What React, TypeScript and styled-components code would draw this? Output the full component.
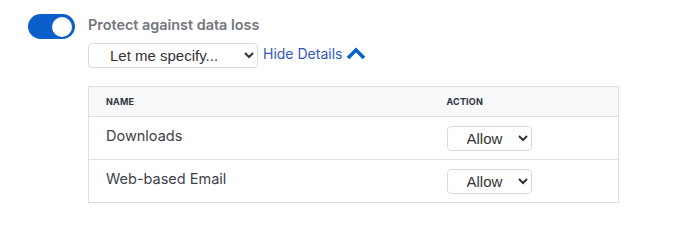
import * as React from 'react'
import styled, { createGlobalStyle } from 'styled-components'

const GlobalStyle = createGlobalStyle`
  body {
    margin: 0;
    background: #ffffff;
    font-family: Inter, "Noto Sans", sans-serif;
  }
`

const Page = styled.div`
  display: flex;
  align-items: flex-start;
  gap: 13px;
  padding: 14px 0 0 28px;
`

const Toggle = styled.button<{ $on: boolean }>`
  width: 47px;
  height: 25px;
  border: none;
  border-radius: 13px;
  padding: 0 3px;
  display: flex;
  align-items: center;
  justify-content: ${(p) => (p.$on ? 'flex-end' : 'flex-start')};
  background: ${(p) => (p.$on ? '#0b5fcb' : '#c4c8cf')};
  cursor: pointer;
`

const Knob = styled.span`
  width: 20px;
  height: 20px;
  border-radius: 50%;
  background: #ffffff;
`

const Content = styled.div`
  display: flex;
  flex-direction: column;
`

const Title = styled.div`
  font-size: 14.4px;
  font-weight: 600;
  color: #72767e;
  line-height: 20px;
  margin-top: 1px;
`

const Controls = styled.div`
  display: flex;
  align-items: center;
  gap: 5px;
  margin-top: 8px;
`

const Select = styled.select<{ $width: number; $inset: number }>`
  width: ${(p) => p.$width}px;
  height: 25px;
  padding: 0 6px 0 ${(p) => p.$inset}px;
  border: 1px solid #d7d9dd;
  border-radius: 4px;
  background: #ffffff;
  color: #333333;
  font-family: "Liberation Sans", Arial, sans-serif;
  font-size: 15px;
`

const DetailsLink = styled.a`
  display: flex;
  align-items: center;
  gap: 4px;
  color: #3558c2;
  font-size: 14px;
  text-decoration: none;
  cursor: pointer;
  margin-top: -4px;
`

const Table = styled.table`
  margin-top: 18px;
  width: 531px;
  table-layout: fixed;
  border-collapse: collapse;
  border: 1px solid #dcdfe3;
`

const HeadCell = styled.th<{ $width?: number }>`
  box-sizing: border-box;
  width: ${(p) => (p.$width ? `${p.$width}px` : 'auto')};
  height: 30px;
  padding: 0 17px;
  text-align: left;
  background: #f8f9fa;
  border-bottom: 1px solid #dcdfe3;
  font-size: 9px;
  font-weight: 700;
  letter-spacing: 0.2px;
  color: #2f3440;
`

const Cell = styled.td`
  height: 43px;
  box-sizing: border-box;
  padding: 9px 17px 0;
  border-bottom: 1px solid #dcdfe3;
  font-size: 14.5px;
  line-height: 20px;
  color: #3d4148;
  vertical-align: top;
`

const rules = ['Downloads', 'Web-based Email']

export default function App() {
  const [on, setOn] = React.useState(true)
  return (
    <>
      <GlobalStyle />
      <Page>
        <Toggle $on={on} onClick={() => setOn(!on)}>
          <Knob />
        </Toggle>
        <Content>
          <Title>Protect against data loss</Title>
          <Controls>
            <Select $width={170} $inset={17} defaultValue="custom">
              <option value="custom">Let me specify...</option>
            </Select>
            <DetailsLink>
              Hide Details
              <svg width="20" height="14" viewBox="0 0 20 14">
                <path d="M2 11 L10 3 L18 11" fill="none" stroke="#0b5fcb" strokeWidth="3.6" strokeLinejoin="miter" />
              </svg>
            </DetailsLink>
          </Controls>
          <Table>
            <thead>
              <tr>
                <HeadCell $width={341}>NAME</HeadCell>
                <HeadCell>ACTION</HeadCell>
              </tr>
            </thead>
            <tbody>
              {rules.map((r) => (
                <tr key={r}>
                  <Cell>{r}</Cell>
                  <Cell>
                    <Select $width={85} $inset={15} defaultValue="allow">
                      <option value="allow">Allow</option>
                      <option value="block">Block</option>
                    </Select>
                  </Cell>
                </tr>
              ))}
            </tbody>
          </Table>
        </Content>
      </Page>
    </>
  )
}
